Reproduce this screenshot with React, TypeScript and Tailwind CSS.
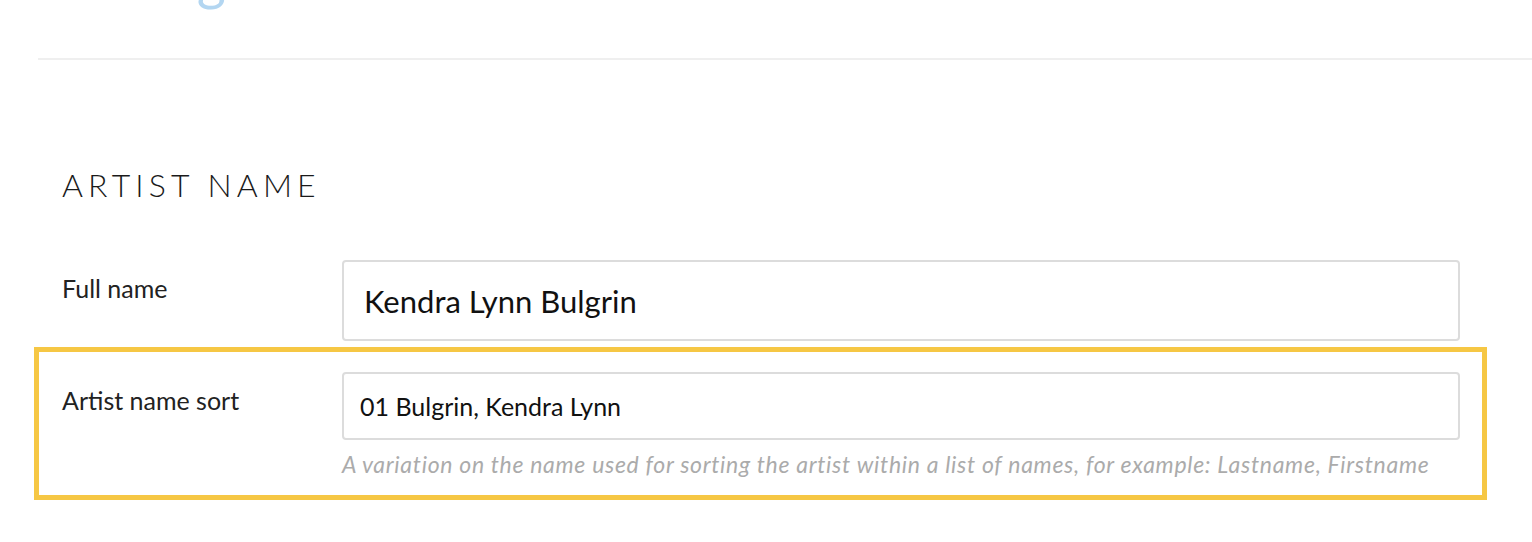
import React from "react";

function FieldRow({
  label,
  value,
  big,
  hint,
  highlight,
}: {
  label: string;
  value: string;
  big?: boolean;
  hint?: string;
  highlight?: boolean;
}) {
  return (
    <section
      className={`flex border-[5px] pl-[23px] pr-[22px] pt-[20px] ${
        highlight ? "border-[#f6c744] pb-[17px]" : "border-transparent pb-[1px]"
      }`}
    >
      <div className="w-[280px] shrink-0 pt-[16px] text-[25px] leading-none text-[#222]">{label}</div>
      <div className="flex-1">
        <input
          readOnly
          defaultValue={value}
          className={`w-full rounded-[4px] border-2 border-[#dcdcdc] bg-white text-[#111] outline-none ${
            big ? "h-[81px] pl-[20px] text-[31px]" : "h-[68px] pl-[16px] text-[25px]"
          }`}
        />
        {hint && (
          <p className="mt-[10px] text-[23px] italic leading-[28px] tracking-[0.7px] text-[#ababab]">{hint}</p>
        )}
      </div>
    </section>
  );
}

export default function App() {
  return (
    <main className="h-[542px] w-[1532px] overflow-hidden bg-white font-['Lato',sans-serif]">
      <header className="ml-[38px] h-[60px] overflow-hidden border-b-2 border-[#efefef]">
        <h1 className="-mt-[50px] ml-[17px] text-[56px] leading-none text-[#b3d6f1]">Editing</h1>
      </header>

      <h2 className="ml-[62px] mt-[109px] text-[32px] font-light leading-none tracking-[0.16em] text-[#1a1a1a]">
        ARTIST NAME
      </h2>

      <div className="ml-[34px] mt-[34px] w-[1453px]">
        <FieldRow label="Full name" value="Kendra Lynn Bulgrin" big />
        <FieldRow
          label="Artist name sort"
          value="01 Bulgrin, Kendra Lynn"
          hint="A variation on the name used for sorting the artist within a list of names, for example: Lastname, Firstname"
          highlight
        />
      </div>
    </main>
  );
}
